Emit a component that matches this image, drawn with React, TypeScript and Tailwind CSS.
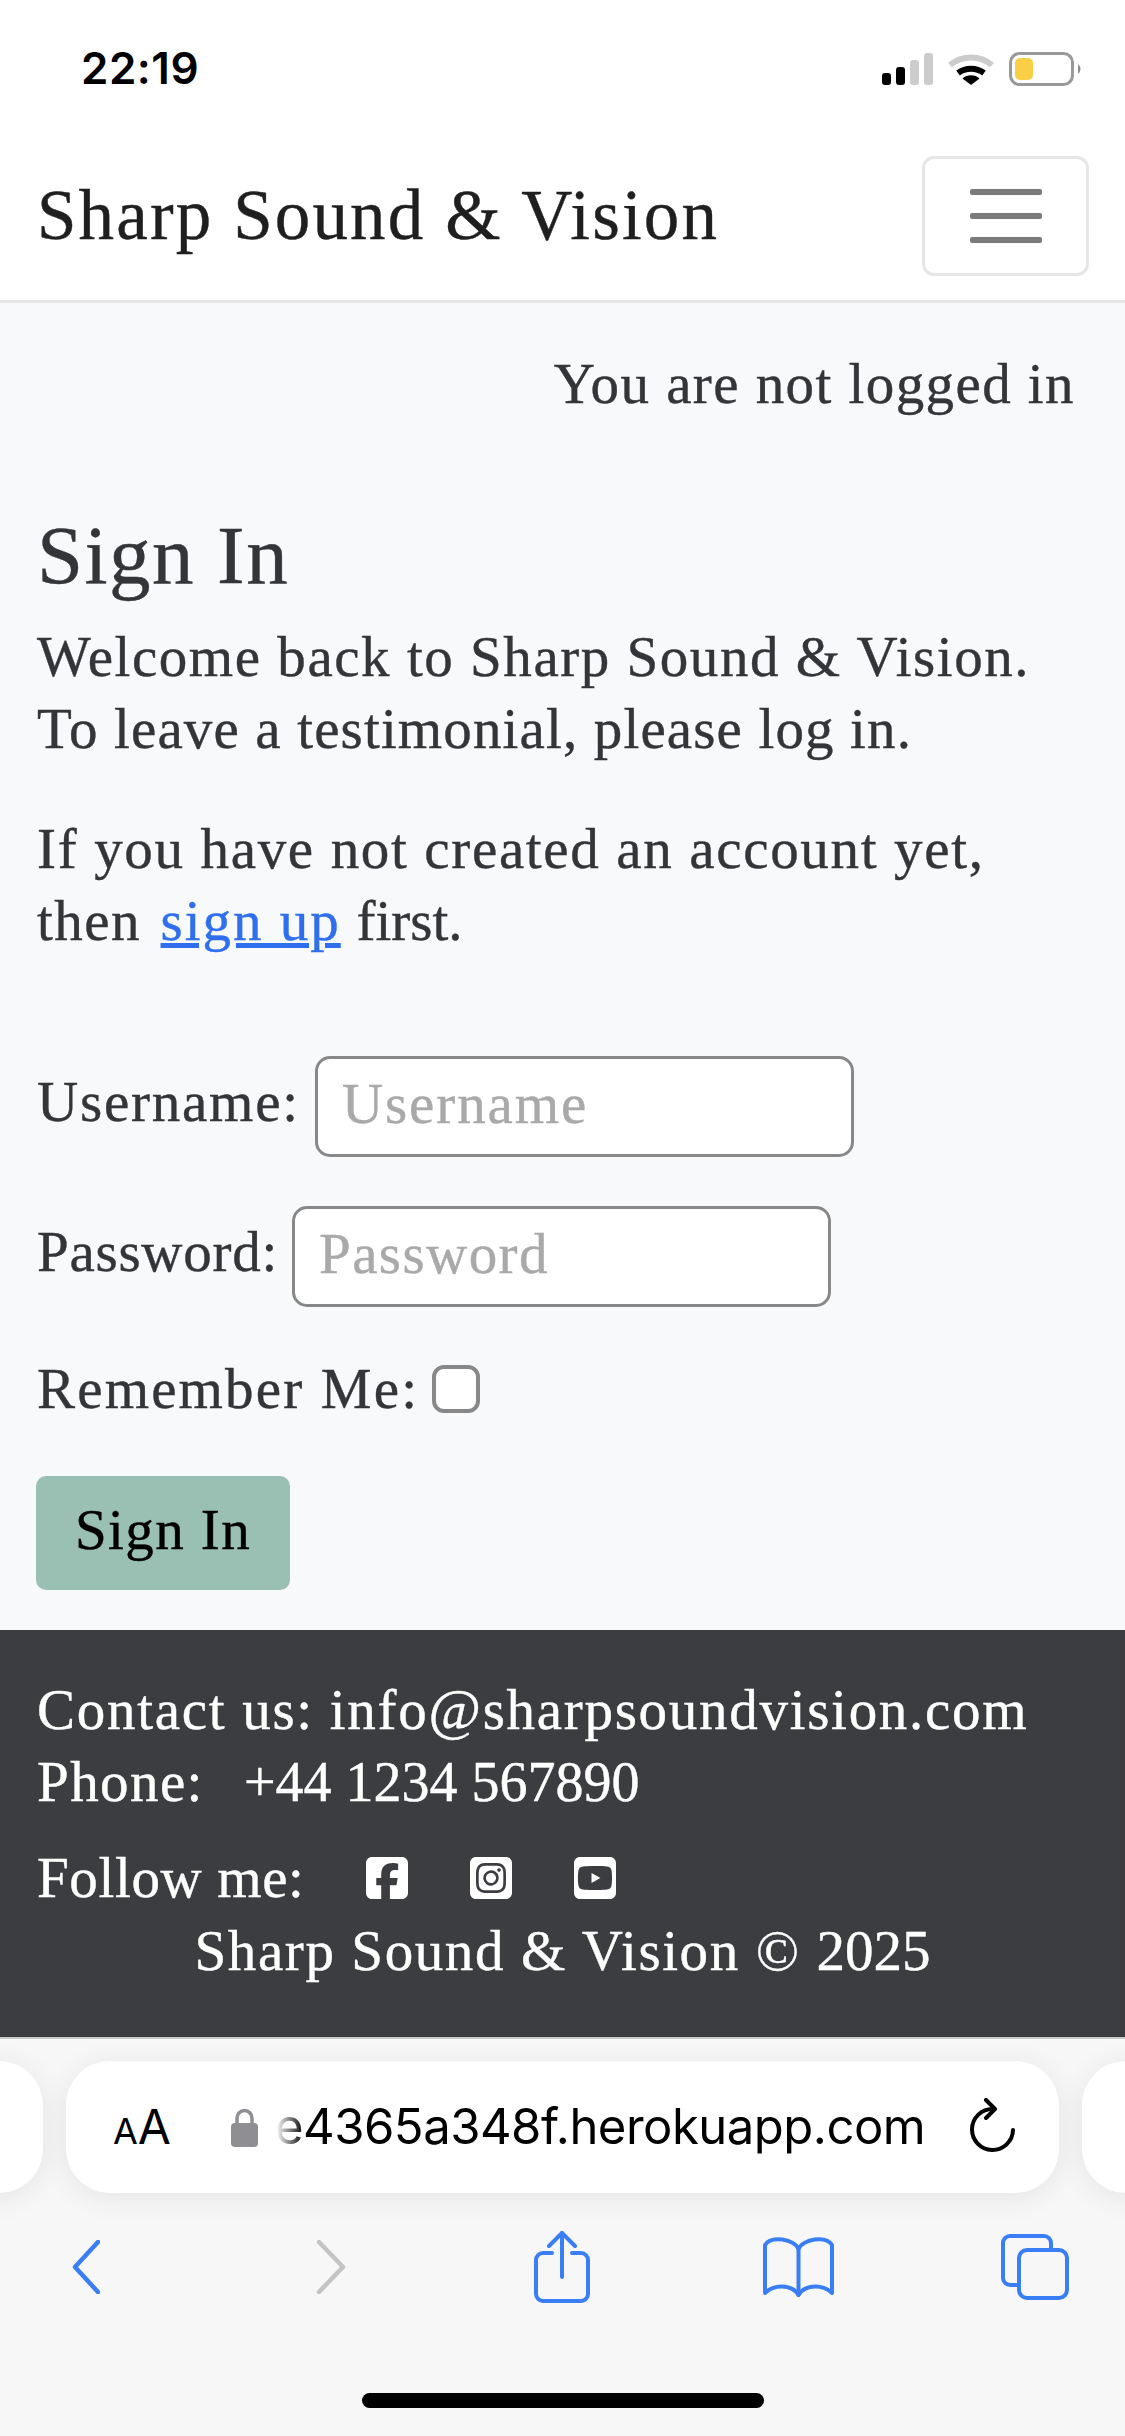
import { FaSquareFacebook, FaSquareInstagram, FaSquareYoutube } from "react-icons/fa6";

const serif = "font-['Liberation_Serif',serif]";

function StatusIcons() {
  return (
    <svg width="202" height="40" viewBox="0 0 202 40" className="block">
      <rect x="1" y="21" width="9" height="12" rx="3" fill="#000" />
      <rect x="15" y="15" width="9" height="18" rx="3" fill="#000" />
      <rect x="29" y="8" width="9" height="25" rx="3" fill="#cccccc" />
      <rect x="43" y="1" width="9" height="32" rx="3" fill="#cccccc" />
      <path d="M69 13 A33 33 0 0 1 111 13" fill="none" stroke="#cccccc" strokeWidth="6" />
      <path d="M77 21 A22 22 0 0 1 103 21" fill="none" stroke="#000" strokeWidth="6" />
      <path d="M90 33 L81.500 26.500 A13 13 0 0 1 98.500 26.500 Z" fill="#000" />
      <rect x="129.500" y="1.500" width="62" height="31" rx="9" fill="none" stroke="#999999" strokeWidth="3" />
      <rect x="134" y="6" width="18" height="22" rx="5" fill="#f9d045" />
      <path d="M197 12 Q202 17 197 22 Z" fill="#8c8c8c" />
    </svg>
  );
}

function LockIcon() {
  return (
    <svg width="27" height="40" viewBox="0 0 27 40" className="block">
      <path d="M6 18 V11 A7.500 7.500 0 0 1 21 11 V18" fill="none" stroke="#8e8e93" strokeWidth="3.500" />
      <rect x="0" y="16" width="27" height="24" rx="4" fill="#8e8e93" />
    </svg>
  );
}

function ReloadIcon() {
  return (
    <svg width="46" height="56" viewBox="0 0 46 56" fill="none" stroke="#000" strokeWidth="4" strokeLinecap="round" strokeLinejoin="round" className="block">
      <path d="M23 11 A20.500 20.500 0 1 0 43 32" />
      <path d="M16 2 L25 11 L16 20" />
    </svg>
  );
}

const inputClass =
  "box-border h-[101px] w-[539px] rounded-[15px] border-[3px] border-[#888888] bg-white px-[24px] pb-[6px] outline-none placeholder:text-[#a9a9a9]";

export default function App() {
  return (
    <div className={`flex h-[2436px] w-[1125px] flex-col overflow-hidden bg-[#f8f9fa] text-[57px] leading-[72px] tracking-[0.025em] text-[#333538] [-webkit-text-stroke:0.4px] ${serif}`}>
      <div className="flex h-[136px] shrink-0 items-start justify-between bg-white pl-[81px] pr-[42px] pt-[52px]">
        <span className="font-['Inter',sans-serif] text-[44px] leading-[32px] font-semibold tracking-[0.5px] text-black [-webkit-text-stroke:0]">22:19</span>
        <StatusIcons />
      </div>

      <nav className="box-border flex h-[167px] shrink-0 items-center justify-between border-b-[3px] border-[#e6e6e6] bg-white pb-[5px] pl-[37px] pr-[36px]">
        <span className="mb-[2px] text-[71px] leading-[84px] tracking-[0.03em] text-[#1f1f1f]">Sharp Sound &amp; Vision</span>
        <button className="flex h-[120px] w-[167px] flex-col items-center justify-center gap-[18px] rounded-[12px] border-[3px] border-[#e6e6e6]">
          <span className="h-[6px] w-[72px] rounded-[2px] bg-[#7a7a7a]" />
          <span className="h-[6px] w-[72px] rounded-[2px] bg-[#7a7a7a]" />
          <span className="h-[6px] w-[72px] rounded-[2px] bg-[#7a7a7a]" />
        </button>
      </nav>

      <main className="flex-1 pl-[37px] pr-[50px] pt-[45px]">
        <p className="text-right">You are not logged in</p>
        <h1 className="mt-[93px] text-[83px] leading-[84px]">Sign In</h1>
        <p className="mt-[24px]">
          <span className="tracking-[0.027em]">Welcome back to Sharp Sound &amp; Vision.</span>
          <br />
          <span className="tracking-[0.02em]">To leave a testimonial, please log in.</span>
        </p>
        <p className="mt-[48px]">
          <span className="tracking-[0.029em]">If you have not created an account yet,</span>
          <br />
          then <a className="ml-[4px] tracking-[0.035em] text-[#2f6fed] underline">sign up</a>{" "}
          <span className="tracking-normal">first.</span>
        </p>

        <form className="mt-[99px]">
          <div className="flex h-[101px] items-center">
            <label className="w-[278px] shrink-0 pb-[10px] tracking-[0.031em]">Username:</label>
            <input placeholder="Username" className={`${inputClass} tracking-[0.033em]`} />
          </div>
          <div className="mt-[49px] flex h-[101px] items-center">
            <label className="w-[255px] shrink-0 pb-[10px] tracking-[0.013em]">Password:</label>
            <input placeholder="Password" className={inputClass} />
          </div>
          <div className="mt-[46px] flex h-[72px] items-center">
            <label className="w-[395px] shrink-0 tracking-[0.038em]">Remember Me:</label>
            <span className="box-border h-[48px] w-[48px] rounded-[12px] border-[4px] border-[#888888] bg-white" />
          </div>
          <button type="button" className="-ml-[1px] mt-[51px] flex h-[114px] w-[254px] items-center justify-center rounded-[10px] bg-[#9abfb3] pb-[6px] text-black">
            Sign In
          </button>
        </form>
      </main>

      <footer className="h-[407px] shrink-0 bg-[#3c3d40] pl-[37px] pt-[44px] text-white">
        <p className="tracking-[0.03em]">Contact us: info@sharpsoundvision.com</p>
        <p>
          Phone:<span className="ml-[40px] text-[56px] tracking-normal">+44 1234 567890</span>
        </p>
        <div className="mt-[25px] flex h-[72px] items-center">
          <span className="w-[326px] shrink-0 pb-[2px] tracking-[0.011em]">Follow me:</span>
          <div className="mb-[2px] flex gap-[56px]">
            <FaSquareFacebook size={48} />
            <FaSquareInstagram size={48} />
            <FaSquareYoutube size={48} />
          </div>
        </div>
        <p className="pr-[37px] text-center tracking-[0.028em]">
          Sharp Sound &amp; Vision © <span className="tracking-normal">2025</span>
        </p>
      </footer>

      <div className="h-[399px] shrink-0 border-t-2 border-[#c9c9c9] bg-[#f7f7f7] [-webkit-text-stroke:0]">
        <div className="mt-[22px] flex h-[132px] justify-center gap-[23px] overflow-visible">
          <div className="h-[132px] w-[300px] shrink-0 rounded-[44px] bg-white shadow-[0_4px_30px_rgba(0,0,0,0.08)]" />
          <div className="relative flex h-[132px] w-[993px] shrink-0 items-center rounded-[44px] bg-white pl-[47px] tracking-normal shadow-[0_4px_30px_rgba(0,0,0,0.08)] font-['Inter',sans-serif] text-black">
            <span className="w-[118px] shrink-0 leading-[50px]">
              <span className="text-[36px]">A</span>
              <span className="text-[48px]">A</span>
            </span>
            <LockIcon />
            <span className="ml-[17px] text-[49px] leading-[60px] tracking-[-0.5px]">e4365a348f.herokuapp.com</span>
            <span className="absolute left-[210px] top-[36px] h-[60px] w-[28px] bg-gradient-to-r from-white to-transparent" />
            <div className="absolute right-[43px] top-[37px]">
              <ReloadIcon />
            </div>
          </div>
          <div className="h-[132px] w-[300px] shrink-0 rounded-[44px] bg-white shadow-[0_4px_30px_rgba(0,0,0,0.08)]" />
        </div>

        <div className="mt-[36px] flex h-[76px] items-center pl-[72px]">
          <svg width="28" height="54" viewBox="0 0 28 54" fill="none" stroke="#3a7ef6" strokeWidth="4.500" strokeLinecap="round" strokeLinejoin="round" className="shrink-0">
            <path d="M26 2 L3 27 L26 52" />
          </svg>
          <svg width="30" height="54" viewBox="0 0 30 54" fill="none" stroke="#c4c4c4" strokeWidth="4.500" strokeLinecap="round" strokeLinejoin="round" className="ml-[216px] shrink-0">
            <path d="M3 2 L27 27 L3 52" />
          </svg>
          <svg width="56" height="72" viewBox="0 0 56 72" fill="none" stroke="#3a7ef6" strokeWidth="4" strokeLinecap="round" strokeLinejoin="round" className="ml-[188px] shrink-0">
            <path d="M18 22 H9 A7 7 0 0 0 2 29 V63 A7 7 0 0 0 9 70 H47 A7 7 0 0 0 54 63 V29 A7 7 0 0 0 47 22 H38" />
            <path d="M28 46 V2" />
            <path d="M15 15 L28 2 L41 15" />
          </svg>
          <svg width="71" height="60" viewBox="0 0 71 60" fill="none" stroke="#3a7ef6" strokeWidth="4" strokeLinecap="round" strokeLinejoin="round" className="ml-[173px] shrink-0">
            <path d="M35.500 12 C31 2 8 -2 2 8 V56 C10 48 28 46 35.500 58 C43 46 61 48 69 56 V8 C63 -2 40 2 35.500 12 Z" />
            <path d="M35.500 12 V58" />
          </svg>
          <svg width="68" height="66" viewBox="0 0 68 66" fill="none" stroke="#3a7ef6" strokeWidth="4" strokeLinecap="round" strokeLinejoin="round" className="ml-[167px] shrink-0">
            <path d="M50 16 V9 A7 7 0 0 0 43 2 H9 A7 7 0 0 0 2 9 V44 A7 7 0 0 0 9 51 H18" />
            <rect x="18" y="16" width="48" height="48" rx="8" />
          </svg>
        </div>

        <div className="mt-[88px] flex justify-center">
          <span className="h-[15px] w-[402px] rounded-full bg-black" />
        </div>
      </div>
    </div>
  );
}
